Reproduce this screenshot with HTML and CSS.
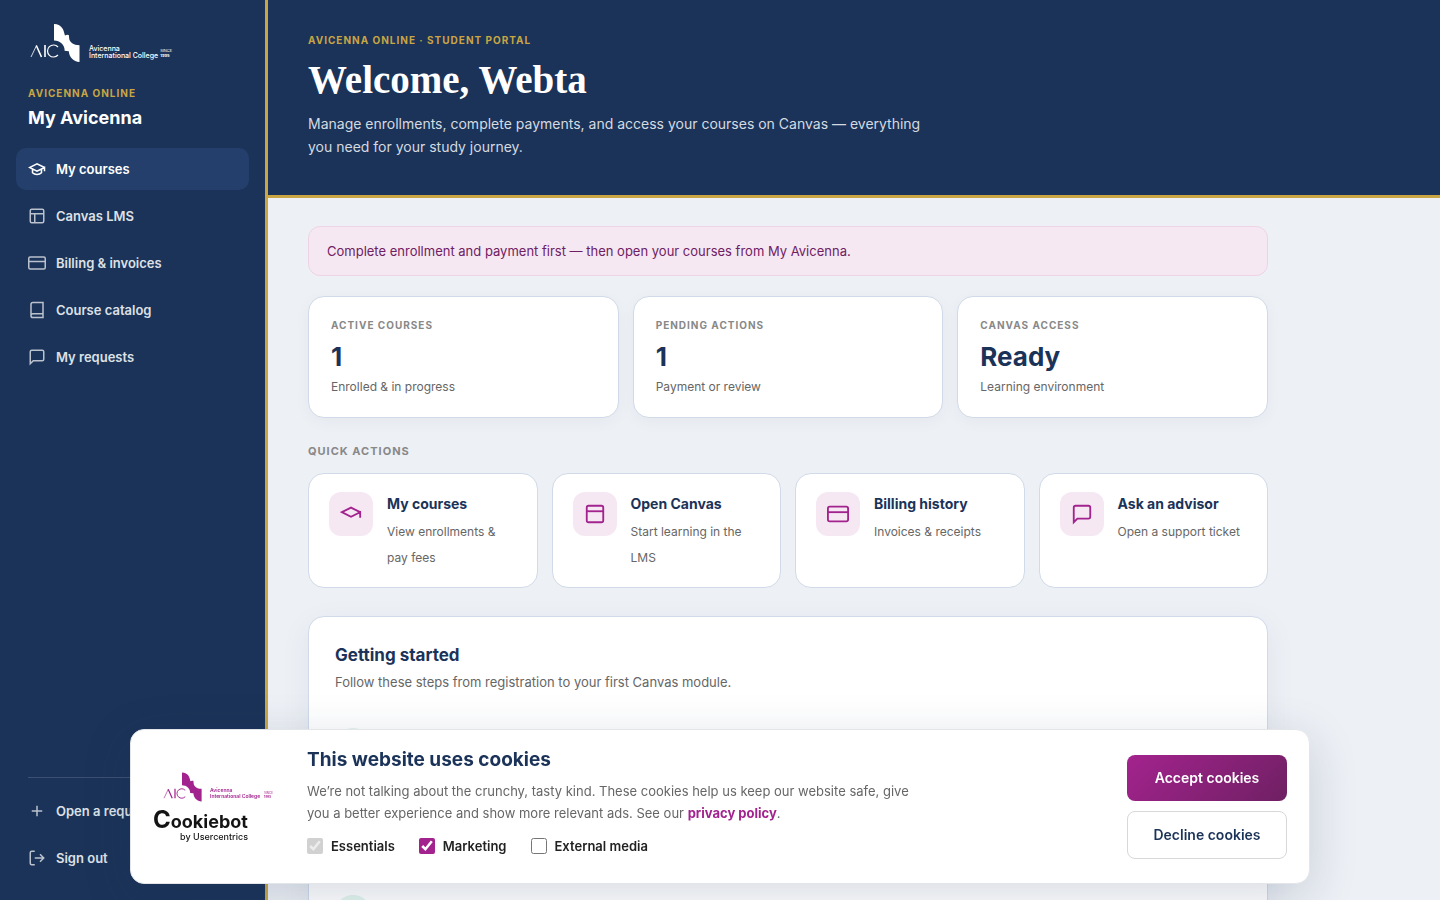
FILE: index.html
```html
<!DOCTYPE html>
<html lang="en">

<head>
  <meta charset="UTF-8">
  <meta name="viewport" content="width=device-width, initial-scale=1.0">
  <title>My Avicenna</title>
  <link rel="stylesheet" href="styles.css">
</head>

<body>
  <!-- shared shapes -->
  <svg class="sprite" aria-hidden="true">
    <symbol id="wing" viewBox="0 0 26 38">
      <path d="M0 0C4 0 7 2 8.500 4.500C10 7 10.300 9.500 11 11.600L13 10.800L14.800 11L15.300 15.300C16 18 19 21.300 25.500 21.300V38C19.500 37.500 15.300 33.500 14.800 27.200L10.600 26.800C11 21 6 16.600 0 16.600Z" fill="currentColor" />
    </symbol>
    <symbol id="aic" viewBox="0 0 30 14">
      <path d="M1 13L6.500 1.500" fill="none" stroke="currentColor" stroke-width="0.800" />
      <path d="M6.300 1.500L11.500 13M15 1V13" fill="none" stroke="currentColor" stroke-width="1.600" />
      <path d="M28 3A6 6 0 1 0 28 11" fill="none" stroke="currentColor" stroke-width="1.200" />
    </symbol>
    <symbol id="cap" viewBox="0 0 24 24">
      <path d="M22 10L12 5L2 10L12 15L22 10V16" />
    </symbol>
    <symbol id="card" viewBox="0 0 24 24">
      <rect x="1" y="4" width="22" height="16" rx="2" />
      <path d="M1 10H23" />
    </symbol>
    <symbol id="chat" viewBox="0 0 24 24">
      <path d="M21 15a2 2 0 0 1-2 2H7l-4 4V5a2 2 0 0 1 2-2h14a2 2 0 0 1 2 2z" />
    </symbol>
  </svg>

  <div class="layout">
    <aside class="sidebar">
      <a class="logo" href="#">
        <span class="logo-mark">
          <svg class="logo-aic"><use href="#aic" /></svg>
          <svg class="logo-wing"><use href="#wing" /></svg>
        </span>
        <span class="logo-name">Avicenna<br>International College</span>
        <span class="logo-since">SINCE<br><b>1995</b></span>
      </a>
      <div class="brand">
        <p class="eyebrow">Avicenna Online</p>
        <p class="brand-title">My Avicenna</p>
      </div>

      <nav class="nav">
        <a class="nav-link active" href="#">
          <svg class="icon" viewBox="0 0 24 24"><path d="M22 10L12 5L2 10L12 15L22 10V15M6 12V17C9 20 15 20 18 17V12" /></svg>
          My courses
        </a>
        <a class="nav-link" href="#">
          <svg class="icon" viewBox="0 0 24 24"><rect x="3" y="3" width="18" height="18" rx="2" /><path d="M3 9H21M9 21V9" /></svg>
          Canvas LMS
        </a>
        <a class="nav-link" href="#">
          <svg class="icon"><use href="#card" /></svg>
          Billing &amp; invoices
        </a>
        <a class="nav-link" href="#">
          <svg class="icon" viewBox="0 0 24 24"><path d="M4 19.500A2.500 2.500 0 0 1 6.500 17H20M6.500 2H20V22H6.500A2.500 2.500 0 0 1 4 19.500V4.500A2.500 2.500 0 0 1 6.500 2Z" /></svg>
          Course catalog
        </a>
        <a class="nav-link" href="#">
          <svg class="icon"><use href="#chat" /></svg>
          My requests
        </a>
      </nav>

      <div class="sidebar-foot">
        <a class="nav-link" href="#">
          <svg class="icon" viewBox="0 0 24 24"><path d="M12 5V19M5 12H19" /></svg>
          Open a request
        </a>
        <a class="nav-link" href="#">
          <svg class="icon" viewBox="0 0 24 24"><path d="M9 21H5A2 2 0 0 1 3 19V5A2 2 0 0 1 5 3H9M16 17L21 12L16 7M21 12H9" /></svg>
          Sign out
        </a>
      </div>
    </aside>

    <main class="main">
      <header class="hero">
        <p class="eyebrow">Avicenna Online · Student Portal</p>
        <h1>Welcome, Webta</h1>
        <p class="hero-text">Manage enrollments, complete payments, and access your courses on Canvas — everything you need for your study journey.</p>
      </header>

      <div class="content">
        <div class="notice">Complete enrollment and payment first — then open your courses from My Avicenna.</div>

        <section class="stats">
          <div class="card stat">
            <p class="stat-label">Active courses</p>
            <p class="stat-value">1</p>
            <p class="stat-note">Enrolled &amp; in progress</p>
          </div>
          <div class="card stat">
            <p class="stat-label">Pending actions</p>
            <p class="stat-value">1</p>
            <p class="stat-note">Payment or review</p>
          </div>
          <div class="card stat">
            <p class="stat-label">Canvas access</p>
            <p class="stat-value">Ready</p>
            <p class="stat-note">Learning environment</p>
          </div>
        </section>

        <h2 class="section-label">Quick actions</h2>
        <section class="actions">
          <a class="card action" href="#">
            <span class="action-icon"><svg class="icon"><use href="#cap" /></svg></span>
            <span class="action-body">
              <strong>My courses</strong>
              <span>View enrollments &amp; pay fees</span>
            </span>
          </a>
          <a class="card action" href="#">
            <span class="action-icon"><svg class="icon" viewBox="0 0 24 24"><rect x="3" y="3" width="18" height="18" rx="2" /><path d="M3 9H21" /></svg></span>
            <span class="action-body">
              <strong>Open Canvas</strong>
              <span>Start learning in the LMS</span>
            </span>
          </a>
          <a class="card action" href="#">
            <span class="action-icon"><svg class="icon"><use href="#card" /></svg></span>
            <span class="action-body">
              <strong>Billing history</strong>
              <span>Invoices &amp; receipts</span>
            </span>
          </a>
          <a class="card action" href="#">
            <span class="action-icon"><svg class="icon"><use href="#chat" /></svg></span>
            <span class="action-body">
              <strong>Ask an advisor</strong>
              <span>Open a support ticket</span>
            </span>
          </a>
        </section>

        <section class="card guide">
          <h2>Getting started</h2>
          <p>Follow these steps from registration to your first Canvas module.</p>
          <div class="steps">
            <div class="step"><span class="step-dot"></span></div>
            <div class="step"><span class="step-dot"></span></div>
          </div>
        </section>
      </div>
    </main>
  </div>

  <div class="cookies" role="dialog" aria-labelledby="cookies-title">
    <div class="cookies-brand">
      <div class="logo logo-small">
        <span class="logo-mark">
          <svg class="logo-aic"><use href="#aic" /></svg>
          <svg class="logo-wing"><use href="#wing" /></svg>
        </span>
        <span class="logo-name">Avicenna<br>International College</span>
        <span class="logo-since">SINCE<br><b>1995</b></span>
      </div>
      <div class="cookiebot">
        <span class="cookiebot-name"><span class="cookiebot-c">C</span>ookiebot</span>
        <span class="cookiebot-by">by Usercentrics</span>
      </div>
    </div>

    <div class="cookies-body">
      <h2 id="cookies-title">This website uses cookies</h2>
      <p>We’re not talking about the crunchy, tasty kind. These cookies help us keep our website safe, give you a better experience and show more relevant ads. See our <a href="#">privacy policy</a>.</p>
      <div class="cookies-options">
        <label><input type="checkbox" checked disabled> Essentials</label>
        <label><input type="checkbox" checked> Marketing</label>
        <label><input type="checkbox"> External media</label>
      </div>
    </div>

    <div class="cookies-buttons">
      <button class="btn btn-accept" type="button">Accept cookies</button>
      <button class="btn btn-decline" type="button">Decline cookies</button>
    </div>
  </div>
</body>

</html>
```

FILE: styles.css
```css
:root {
  --navy: #1b3358;
  --gold: #c9a544;
  --purple: #a3238e;
  --plum: #6f2063;
  --line: #d0dae8;
  --pink: #f5e8f3;
  --grey: #666666;
}

* {
  box-sizing: border-box;
}

body {
  margin: 0;
  background: #edf0f5;
  color: var(--navy);
  font-family: Inter, "Liberation Sans", sans-serif;
  font-size: 13px;
}

p,
h1,
h2 {
  margin: 0;
}

a {
  text-decoration: none;
}

.sprite {
  display: none;
}

.icon {
  width: 18px;
  height: 18px;
  flex: none;
  fill: none;
  stroke: currentColor;
  stroke-width: 2;
}

.layout {
  display: flex;
  height: 100vh;
  overflow: hidden;
}

/* sidebar */
.sidebar {
  display: flex;
  flex-direction: column;
  flex: none;
  width: 268px;
  padding: 24px 16px 21px;
  background: var(--navy);
  border-right: 3px solid var(--gold);
}

.logo {
  display: flex;
  align-items: flex-end;
  height: 38px;
  margin-left: 14px;
  color: #ffffff;
}

.logo-mark {
  display: flex;
  align-items: flex-end;
  height: 100%;
}

.logo-aic {
  width: 30px;
  height: 14px;
  margin-bottom: 4px;
}

.logo-wing {
  width: 26px;
  height: 38px;
  margin-left: -6px;
}

.logo-name {
  margin: 0 2px 3px 9px;
  font-size: 7px;
  font-weight: 500;
  line-height: 7px;
  white-space: nowrap;
}

.logo-since {
  margin-bottom: 4px;
  font-size: 4px;
  line-height: 5px;
}

.brand {
  margin: 24px 12px 18px;
}

.eyebrow {
  color: var(--gold);
  font-size: 10px;
  font-weight: 700;
  letter-spacing: 1px;
  line-height: 14px;
  text-transform: uppercase;
}

.brand-title {
  margin-top: 6px;
  color: #ffffff;
  font-size: 18px;
  font-weight: 700;
  line-height: 24px;
}

.nav,
.sidebar-foot {
  display: flex;
  flex-direction: column;
  gap: 5px;
}

.nav-link {
  display: flex;
  align-items: center;
  gap: 10px;
  height: 42px;
  padding: 0 12px;
  border-radius: 10px;
  color: #dde1e7;
  font-weight: 600;
}

.nav-link .icon {
  stroke: #bbc2cd;
}

.nav-link.active {
  background: #243f6b;
  color: #ffffff;
}

.nav-link.active .icon {
  stroke: #ffffff;
}

.sidebar-foot {
  position: relative;
  margin-top: auto;
  padding-top: 13px;
}

.sidebar-foot::before {
  content: "";
  position: absolute;
  top: 0;
  left: 12px;
  right: 12px;
  border-top: 1px solid #3d5272;
}

/* main column */
.main {
  flex: 1;
  min-width: 0;
}

.hero {
  padding: 33px 40px 37px;
  background: var(--navy);
  border-bottom: 3px solid var(--gold);
}

.hero h1 {
  margin: 9px 0 8px;
  color: #ffffff;
  font-family: "Liberation Serif", serif;
  font-size: 39px;
  font-weight: 700;
  line-height: 48px;
}

.hero-text {
  max-width: 620px;
  color: #d5dae1;
  font-size: 14px;
  line-height: 23px;
}

.content {
  max-width: 1040px;
  padding: 28px 40px;
}

.notice {
  padding: 14px 18px;
  border: 1px solid #eed3e6;
  border-radius: 12px;
  background: var(--pink);
  color: var(--plum);
  line-height: 20px;
}

.card {
  border: 1px solid var(--line);
  border-radius: 16px;
  background: #ffffff;
}

.stats {
  display: grid;
  grid-template-columns: repeat(3, 1fr);
  gap: 14px;
  margin: 20px 0 24px;
}

.stat {
  padding: 20px 22px;
  box-shadow: 0 4px 16px rgba(27, 51, 88, 0.04);
}

.stat-label {
  color: #888888;
  font-size: 10px;
  font-weight: 700;
  letter-spacing: 1px;
  line-height: 16px;
  text-transform: uppercase;
}

.stat-value {
  margin: 8px 0 4px;
  font-size: 26px;
  font-weight: 700;
  line-height: 32px;
}

.stat-note {
  color: var(--grey);
  font-size: 12px;
  line-height: 20px;
}

.section-label {
  margin-bottom: 13px;
  color: #888888;
  font-size: 11px;
  font-weight: 700;
  letter-spacing: 1px;
  line-height: 18px;
  text-transform: uppercase;
}

.actions {
  display: grid;
  grid-template-columns: repeat(4, 1fr);
  gap: 14px;
}

.action {
  display: flex;
  gap: 14px;
  padding: 18px 20px 16px;
}

.action-icon {
  display: grid;
  place-items: center;
  flex: none;
  width: 44px;
  height: 44px;
  border-radius: 12px;
  background: var(--pink);
  color: var(--purple);
}

.action-icon .icon {
  width: 22px;
  height: 22px;
}

.action-body {
  color: var(--grey);
  font-size: 12px;
  line-height: 26px;
}

.action-body strong {
  display: block;
  margin-bottom: 3px;
  color: var(--navy);
  font-size: 14px;
  line-height: 24px;
}

.guide {
  margin-top: 28px;
  padding: 25px 26px;
  box-shadow: 0 8px 32px rgba(27, 51, 88, 0.06);
}

.guide h2 {
  font-size: 17px;
  line-height: 26px;
}

.guide p {
  margin-top: 4px;
  color: var(--grey);
  line-height: 20px;
}

.steps {
  margin-top: 36px;
}

.step {
  height: 167px;
}

.step-dot {
  display: block;
  width: 36px;
  height: 36px;
  border-radius: 50%;
  background: #e3f6ee;
}

/* cookie bar */
.cookies {
  position: fixed;
  left: 0;
  right: 0;
  bottom: 16px;
  display: flex;
  align-items: center;
  width: calc(100% - 32px);
  max-width: 1180px;
  margin: 0 auto;
  padding: 19px 22px;
  border: 1px solid #e3e5e8;
  border-radius: 14px;
  background: #ffffff;
  box-shadow: 0 12px 48px rgba(27, 51, 88, 0.18);
}

.cookies-brand {
  flex: none;
  width: 154px;
}

.logo-small {
  height: 30px;
  margin-left: 10px;
  color: var(--purple);
}

.logo-small .logo-aic {
  width: 24px;
  height: 11px;
  margin-bottom: 3px;
}

.logo-small .logo-wing {
  width: 20px;
  height: 30px;
  margin-left: -5px;
}

.logo-small .logo-name {
  margin: 0 4px 3px 8px;
  font-size: 5px;
  font-weight: 600;
  line-height: 6px;
}

.logo-small .logo-since {
  margin-bottom: 3px;
  font-size: 3px;
  line-height: 4px;
}

.cookiebot {
  display: flex;
  flex-direction: column;
  width: 95px;
  margin-top: 8px;
  color: #141414;
}

.cookiebot-name {
  font-size: 18px;
  font-weight: 700;
  line-height: 20px;
}

.cookiebot-c {
  font-size: 24px;
}

.cookiebot-by {
  font-size: 9px;
  font-weight: 500;
  line-height: 10px;
  text-align: right;
}

.cookies-body {
  flex: 1;
  padding-bottom: 9px;
}

.cookies-body h2 {
  font-size: 19px;
  line-height: 22px;
}

.cookies-body p {
  max-width: 620px;
  margin: 9px 0 13px;
  color: var(--grey);
  line-height: 22px;
}

.cookies-body a {
  color: var(--purple);
  font-weight: 700;
}

.cookies-options {
  display: flex;
  gap: 24px;
}

.cookies-options label {
  display: flex;
  align-items: center;
  gap: 8px;
  color: #222222;
  font-weight: 600;
  line-height: 18px;
}

.cookies-options input {
  width: 16px;
  height: 16px;
  margin: 0;
  accent-color: var(--purple);
}

.cookies-buttons {
  display: flex;
  flex-direction: column;
  flex: none;
  gap: 10px;
  width: 160px;
}

.btn {
  padding: 14px 16px;
  border: 0;
  border-radius: 8px;
  font-family: inherit;
  font-size: 14px;
  font-weight: 600;
  line-height: 18px;
}

.btn-accept {
  background: linear-gradient(135deg, var(--purple), var(--plum));
  color: #ffffff;
}

.btn-decline {
  border: 1px solid #d8d8d8;
  background: #ffffff;
  color: var(--navy);
}
```
